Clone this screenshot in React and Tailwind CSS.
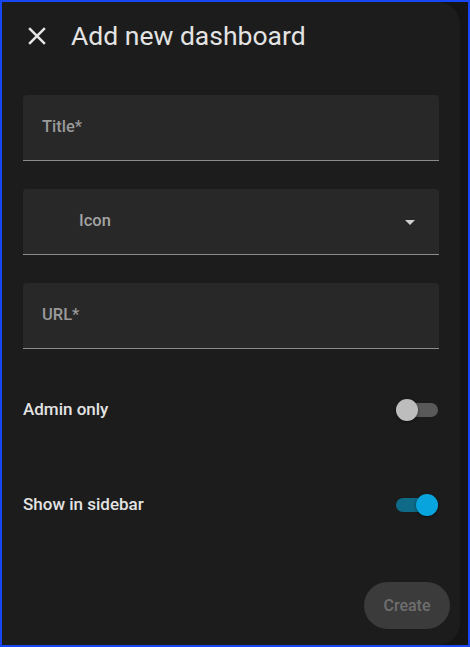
export default function App() {
  const field = 'h-[66px] w-full rounded-t-[4px] bg-[#282828] border-b border-[#8c8c8c] flex items-center'

  return (
    <div className="w-[470px] h-[647px] border-2 border-[#1846f2] bg-[#141414] overflow-hidden" style={{ fontFamily: 'Roboto, "Liberation Sans", sans-serif' }}>
      <div className="w-[458px] h-full bg-[#1c1c1c] rounded-r-[22px] flex flex-col">
        {/* header */}
        <div className="h-[68px] flex items-center pl-[20px] shrink-0">
          <svg width="30" height="30" viewBox="0 0 24 24" className="text-[#e6e6e6]">
            <path d="M19 6.41 17.59 5 12 10.59 6.41 5 5 6.41 10.59 12 5 17.59 6.41 19 12 13.41 17.59 19 19 17.59 13.41 12z" fill="currentColor" />
          </svg>
          <h1 className="ml-[19px] text-[26.5px] text-[#e3e3e3] font-normal leading-none">Add new dashboard</h1>
        </div>

        <div className="px-[21px] mt-[25px] flex flex-col gap-[28px]">
          <div className={field}>
            <span className="pl-[19px] text-[16.5px] font-medium text-[#9a9a9a]">Title*</span>
          </div>
          <div className={field}>
            <span className="pl-[56px] text-[16.5px] font-medium text-[#a3a3a3] flex-1">Icon</span>
            <svg width="24" height="24" viewBox="0 0 24 24" className="mr-[17px] text-[#d0d0d0]">
              <path d="M7 10l5 5 5-5z" fill="currentColor" />
            </svg>
          </div>
          <div className={field}>
            <span className="pl-[19px] text-[16.5px] font-medium text-[#9a9a9a]">URL*</span>
          </div>
        </div>

        <div className="px-[21px] mt-[37px] flex flex-col gap-[47px]">
          <div className="h-[48px] flex items-center justify-between">
            <span className="text-[17px] font-medium text-[#e3e3e3]">Admin only</span>
            <div className="relative w-[42px] h-[14px] rounded-full bg-[#595959] mr-[1px]">
              <div className="absolute left-0 top-1/2 -translate-y-1/2 w-[22px] h-[22px] rounded-full bg-[#bdbdbd] shadow-[0_1px_3px_rgba(0,0,0,0.5)]" />
            </div>
          </div>
          <div className="h-[48px] flex items-center justify-between">
            <span className="text-[17px] font-medium text-[#e3e3e3]">Show in sidebar</span>
            <div className="relative w-[42px] h-[14px] rounded-full bg-[#0f6a88] mr-[1px]">
              <div className="absolute right-0 top-1/2 -translate-y-1/2 w-[22px] h-[22px] rounded-full bg-[#07a4dd] shadow-[0_1px_3px_rgba(0,0,0,0.5)]" />
            </div>
          </div>
        </div>

        <div className="mt-[53px] flex justify-end pr-[10px]">
          <button className="w-[86px] h-[47px] rounded-full bg-[#3b3b3b] text-[16px] font-medium text-[#6e6e6e]">Create</button>
        </div>
      </div>
    </div>
  )
}
